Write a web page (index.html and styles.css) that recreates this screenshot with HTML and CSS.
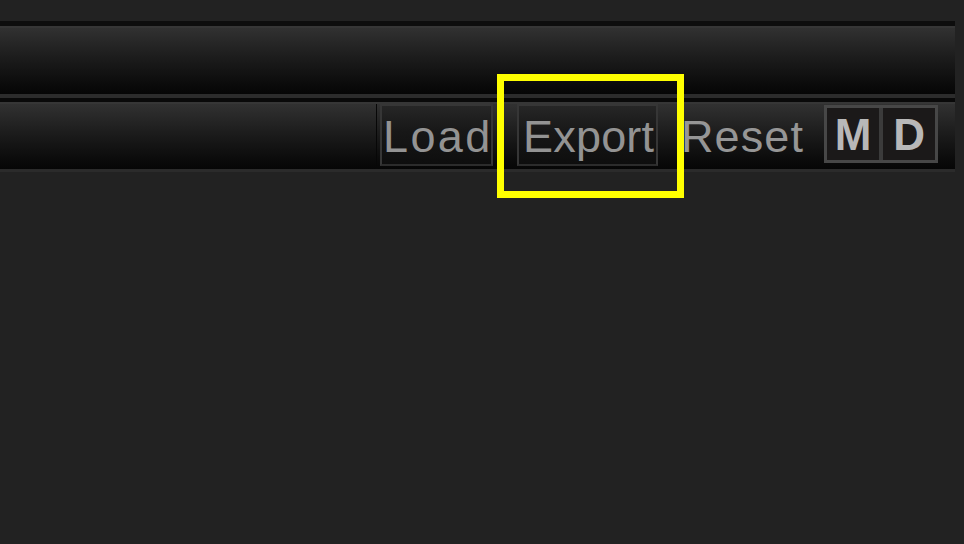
FILE: index.html
```html
<!DOCTYPE html>
<html>
<head>
<meta charset="utf-8">
<link rel="stylesheet" href="styles.css">
</head>
<body>
<div class="screen">
  <div class="top-space"></div>
  <div class="rule-dark"></div>
  <div class="bar bar-title"></div>
  <div class="rule-light"></div>
  <div class="rule-dark thin"></div>
  <div class="bar toolbar">
    <div class="field"></div>
    <div class="btn btn-load">Load</div>
    <div class="btn btn-export">Export</div>
    <div class="txt-btn">Reset</div>
    <div class="mode-group">
      <div class="mode">M</div>
      <div class="mode-divider"></div>
      <div class="mode">D</div>
    </div>
    <div class="bar-tail"></div>
  </div>
  <div class="rule-light bottom"></div>
  <div class="highlight"></div>
</div>
</body>
</html>
```
FILE: styles.css
```css
html, body {
  margin: 0;
  padding: 0;
  background: #222222;
}
body {
  width: 964px;
  height: 544px;
  overflow: hidden;
  font-family: "Liberation Sans", Arial, sans-serif;
}
.screen {
  position: relative;
  width: 964px;
  height: 544px;
  display: flex;
  flex-direction: column;
}
.top-space {
  height: 21px;
}
.rule-dark {
  width: 955px;
  height: 5px;
  background: #0d0d0d;
}
.rule-dark.thin {
  height: 4px;
  background: #090909;
}
.rule-light {
  width: 955px;
  height: 4px;
  background: #2c2c2c;
}
.rule-light.bottom {
  height: 3px;
  background: #2b2b2b;
}
.bar {
  width: 955px;
  box-sizing: border-box;
  border-top: 2px solid #363636;
  background: linear-gradient(to bottom, #313131 0%, #1c1c1c 45%, #0b0b0b 85%, #060606 100%);
}
.bar-title {
  height: 68px;
}
.toolbar {
  height: 67px;
  display: flex;
  align-items: flex-start;
}
.field {
  width: 377px;
  height: 65px;
  border-right: 1px solid #070707;
  box-sizing: border-box;
}
.btn {
  box-sizing: border-box;
  height: 62px;
  border: 2px solid #363636;
  border-bottom-color: #2c2c2c;
  background: linear-gradient(to bottom, #262626 0%, #171717 45%, #0e0e0e 100%);
  color: #939393;
  font-size: 45px;
  line-height: 52px;
  padding-top: 5px;
}
.btn-load {
  margin-left: 3px;
  width: 113px;
  padding-left: 1px;
  letter-spacing: 2.4px;
}
.btn-export {
  margin-left: 24px;
  width: 141px;
  padding-left: 4px;
  letter-spacing: 0.2px;
}
.txt-btn {
  margin-left: 23px;
  height: 62px;
  color: #969696;
  font-size: 45px;
  line-height: 52px;
  padding-top: 7px;
  box-sizing: border-box;
  letter-spacing: 1.1px;
}
.mode-group {
  margin-left: 20px;
  margin-top: 1px;
  width: 114px;
  height: 58px;
  box-sizing: border-box;
  border: 3px solid #474747;
  display: flex;
  background: #1b1919;
}
.mode {
  flex: 1;
  text-align: center;
  color: #b8b8b8;
  font-weight: bold;
  font-size: 44px;
  line-height: 52px;
  padding-top: 1px;
}
.mode-divider {
  width: 4px;
  background: #3b3b3b;
}
.bar-tail {
  flex: 1;
}
.highlight {
  position: absolute;
  left: 497px;
  top: 74px;
  width: 187px;
  height: 124px;
  box-sizing: border-box;
  border: 7px solid #ffff00;
}
```
